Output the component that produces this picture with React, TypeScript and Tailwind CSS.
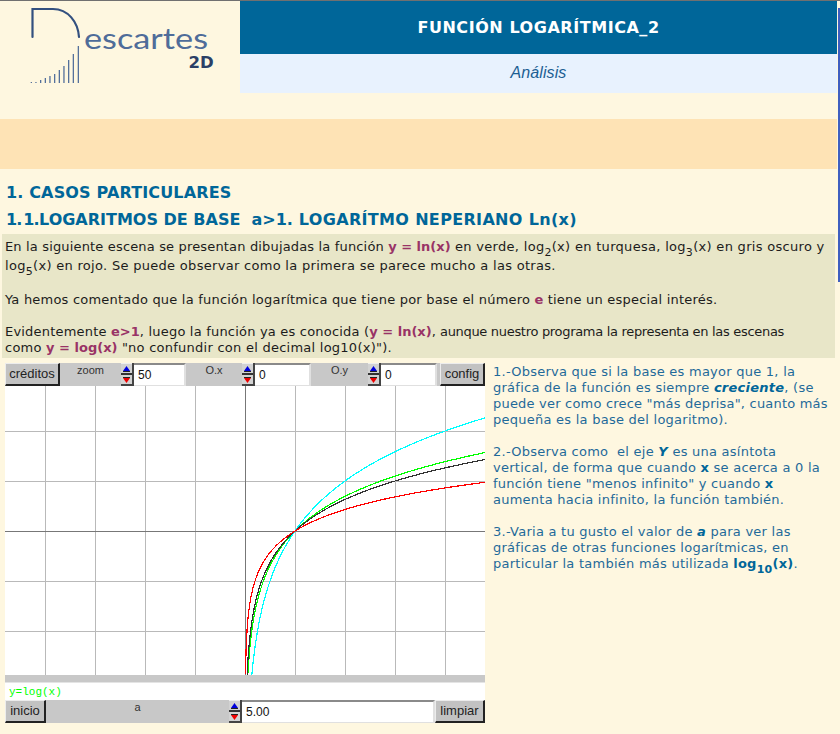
import React from "react";

const curve = (base: number) => {
  const pts: string[] = [];
  for (let px = 0.25; px <= 240; px += 0.25) {
    const y = 145 - (50 * Math.log(px / 50)) / Math.log(base);
    if (y > 300) continue;
    pts.push(`${240 + px},${y.toFixed(2)}`);
  }
  return pts.join(" ");
};

function Graph() {
  const vs = [40, 90, 140, 190, 290, 340, 390, 440];
  const hs = [45, 95, 195, 245];
  return (
    <svg width="480" height="289" className="block bg-white" shapeRendering="crispEdges">
      {vs.map((x) => (
        <rect key={x} x={x} y={0} width={1} height={289} fill="#b9b9b9" />
      ))}
      {hs.map((y) => (
        <rect key={y} x={0} y={y} width={480} height={1} fill="#b9b9b9" />
      ))}
      <rect x={240} y={0} width={1} height={289} fill="#777777" />
      <rect x={0} y={145} width={480} height={1} fill="#777777" />
      <polyline points={curve(2)} fill="none" stroke="#00ffff" strokeWidth="1.2" />
      <polyline points={curve(Math.E)} fill="none" stroke="#00ff00" strokeWidth="1.2" />
      <polyline points={curve(3)} fill="none" stroke="#333333" strokeWidth="1.2" />
      <polyline points={curve(5)} fill="none" stroke="#ff0000" strokeWidth="1.2" />
    </svg>
  );
}

function Btn({ w, label }: { w: string; label: string }) {
  return (
    <div
      className={`${w} h-full shrink-0 flex items-center justify-center bg-[#c2c2c2] border-t border-l border-t-[#ececec] border-l-[#ececec] border-r-2 border-b-2 border-r-[#222222] border-b-[#222222] text-[#222222] text-[13px] font-['Liberation_Sans',sans-serif]`}
    >
      {label}
    </div>
  );
}

function Spin() {
  return (
    <div className="w-[13px] h-full shrink-0 flex flex-col border-r-2 border-[#444444]">
      <div className="h-[12px] flex items-center justify-center border-b-2 border-[#333333] bg-[#d2d2d2] border-t border-t-[#eeeeee]">
        <svg width="7" height="6" viewBox="0 0 7 6">
          <polygon points="3.5,0 7,5 0,5" fill="#0000dd" />
          <rect x="0" y="5" width="7" height="1" fill="#222222" />
        </svg>
      </div>
      <div className="h-[11px] flex items-center justify-center bg-[#d2d2d2] border-b-2 border-[#444444]">
        <svg width="7" height="6" viewBox="0 0 7 6">
          <rect x="0" y="0" width="7" height="1" fill="#222222" />
          <polygon points="0,1 7,1 3.5,6" fill="#ee0000" />
        </svg>
      </div>
    </div>
  );
}

function Field({ w, value }: { w: string; value: string }) {
  return (
    <div
      className={`${w} h-full shrink-0 flex items-center pl-[4px] bg-white border-t-2 border-t-[#8a8a8a] border-b border-b-[#e0e0e0] border-r-2 border-r-[#e0e0e0] text-[12px] text-[#111111] font-['Liberation_Sans',sans-serif]`}
    >
      {value}
    </div>
  );
}

function Label({ w, text }: { w: string; text: string }) {
  return (
    <div className={`${w} h-full shrink-0 text-center pt-[1px] text-[11px] leading-[13px] text-[#333333] font-['Liberation_Sans',sans-serif]`}>
      {text}
    </div>
  );
}

const Hi = ({ children }: { children: React.ReactNode }) => (
  <b className="text-[#993366] tracking-normal">{children}</b>
);

const Sub = ({ children }: { children: React.ReactNode }) => (
  <sub className="text-[11px] align-[-2px] leading-[0]">{children}</sub>
);

function Logo() {
  const bars: [number, number][] = [
    [30.7, 82], [35.3, 82], [40, 80], [44.7, 78], [49.3, 76], [54, 74],
    [58.7, 70], [63.3, 66], [68, 60], [72.7, 54], [77.7, 46],
  ];
  return (
    <svg width="240" height="92" className="block">
      <path d="M32.5 37 L32.5 9 L53 9 C68 9 78 22 79 37" fill="none" stroke="#33507f" strokeWidth="2.2" strokeLinecap="round" transform="translate(0,-1)" />
      {bars.map(([x, t]) => (
        <rect key={x} x={x} y={t - 1} width="1.3" height={83 - t} fill="#54709b" />
      ))}
      <text x="84" y="47.5" fontFamily="'Lato',sans-serif" fontSize="28" fontWeight="400" fill="#4f6c99" textLength="124" lengthAdjust="spacingAndGlyphs">
        escartes
      </text>
      <text x="188.5" y="67" fontFamily="'DejaVu Sans',sans-serif" fontWeight="700" fontSize="16.5" fill="#2b3f66">
        2D
      </text>
    </svg>
  );
}

export default function App() {
  return (
    <div className="relative w-[840px] h-[734px] overflow-hidden bg-[#fef7e0] font-['DejaVu_Sans',sans-serif]">
      <div className="absolute right-0 top-[8px] w-[2px] h-[274px] bg-[#3f5fc0]" />
      <div className="h-px bg-[#707070]" />
      <div className="w-[837px]">
        <div className="flex h-[92px]">
          <div className="w-[240px] shrink-0">
            <Logo />
          </div>
          <div className="flex-1 flex flex-col">
            <div className="h-[53px] bg-[#006699] flex items-center justify-center text-white font-bold text-[16px] tracking-[0.55px] pt-[1px]">
              FUNCIÓN LOGARÍTMICA_2
            </div>
            <div className="h-[39px] bg-[#e8f2fe] flex items-center justify-center italic text-[16px] tracking-[0.1px] pb-[1px] text-[#1c5f93] font-['Liberation_Sans',sans-serif]">
              Análisis
            </div>
          </div>
        </div>
        <div className="mt-[26px] h-[50px] bg-[#fee3b5]" />
        <div className="mt-[14px] h-[20px] pl-[6px] text-[16px] tracking-[0.15px] leading-[20px] font-bold text-[#006699]">
          1. CASOS PARTICULARES
        </div>
        <div className="mt-[7px] h-[20px] pl-[6px] text-[16px] leading-[20px] font-bold text-[#006699] flex whitespace-pre">
          <span className="w-[33px] shrink-0 tracking-[-1px] [word-spacing:-2.5px]">1. 1.</span>
          <span>LOGARITMOS DE BASE&nbsp; a&gt;1.</span>
          <span className="tracking-[0.33px]"> LOGARÍTMO NEPERIANO Ln(x)</span>
        </div>
        <div className="mt-[4px] ml-[2px] w-[833px] h-[124px] bg-[#e8e6c8] pl-[3px] pt-[5px] text-[13px] text-[#1c1c1c] whitespace-nowrap">
          <div className="h-[19px] leading-[16px] tracking-[0.3px]">
            <span className="tracking-[0.16px]">En la siguiente escena se presentan dibujadas la función </span><Hi>y = ln(x)</Hi> en verde, log<Sub>2</Sub>(x) en turquesa, log<Sub>3</Sub>(x) en gris oscuro y
          </div>
          <div className="h-[34px] leading-[16px] tracking-[0.3px]">
            log<Sub>5</Sub>(x) en rojo. Se puede observar como la primera se parece mucho a las otras.
          </div>
          <div className="h-[32px] leading-[16px] tracking-[0.21px]">
            Ya hemos comentado que la función logarítmica que tiene por base el número <Hi>e</Hi> tiene un especial interés.
          </div>
          <div className="h-[16px] leading-[16px]">
            <span className="tracking-[0.2px]">Evidentemente </span><Hi>e&gt;1</Hi><span className="tracking-[0.2px]">, luego la función ya es conocida (</span><Hi>y = ln(x)</Hi>, <span className="tracking-[-0.31px]">aunque nuestro programa la representa en las escenas</span>
          </div>
          <div className="h-[16px] leading-[16px] tracking-[0.25px]">
            como <Hi>y = log(x)</Hi> "no confundir con el decimal log10(x)").
          </div>
        </div>
        <div className="mt-[5px] flex">
          <div className="ml-[5px] w-[480px] shrink-0 flex flex-col">
            <div className="h-[23px] flex bg-[#c8c8c8]">
              <Btn w="w-[55px]" label="créditos" />
              <Label w="w-[61px]" text="zoom" />
              <Spin />
              <Field w="w-[52px]" value="50" />
              <Label w="w-[56px]" text="O.x" />
              <Spin />
              <Field w="w-[56px]" value="0" />
              <Label w="w-[57px]" text="O.y" />
              <Spin />
              <Field w="w-[56px]" value="0" />
              <div className="w-[3px] shrink-0" />
              <Btn w="w-[45px]" label="config" />
            </div>
            <Graph />
            <div className="h-[7px] bg-[#c8c8c8]" />
            <div className="h-[18px] bg-white border-t border-[#e4e4e4] pl-[4px] text-[11px] leading-[18px] text-[#00ff00] font-['Liberation_Mono',monospace]">
              y=log(x)
            </div>
            <div className="h-[23px] flex bg-[#c8c8c8]">
              <Btn w="w-[41px]" label="inicio" />
              <Label w="w-[183px]" text="a" />
              <Spin />
              <Field w="w-[193px]" value="5.00" />
              <Btn w="w-[50px]" label="limpiar" />
            </div>
          </div>
          <div className="ml-[8px] pt-[1px] text-[13px] leading-[16px] tracking-[0.25px] text-[#1f6a9a] whitespace-nowrap">
            <div>1.-Observa que si la base es mayor que 1, la</div>
            <div>gráfica de la función es siempre <b className="italic text-[#006699]">creciente</b>, (se</div>
            <div className="tracking-[0.2px]">puede ver como crece "más deprisa", cuanto más</div>
            <div>pequeña es la base del logaritmo).</div>
            <div className="mt-[16px]">2.-Observa como&nbsp; el eje <b className="italic text-[#006699]">Y</b> es una asíntota</div>
            <div>vertical, de forma que cuando <b className="text-[#006699]">x</b> se acerca a 0 la</div>
            <div>función tiene "menos infinito" y cuando <b className="text-[#006699]">x</b></div>
            <div>aumenta hacia infinito, la función también.</div>
            <div className="mt-[16px]">3.-Varia a tu gusto el valor de <b className="italic text-[#006699]">a</b> para ver las</div>
            <div>gráficas de otras funciones logarítmicas, en</div>
            <div>particular la también más utilizada <b className="text-[#006699]">log<Sub>10</Sub>(x)</b>.</div>
          </div>
        </div>
      </div>
    </div>
  );
}
